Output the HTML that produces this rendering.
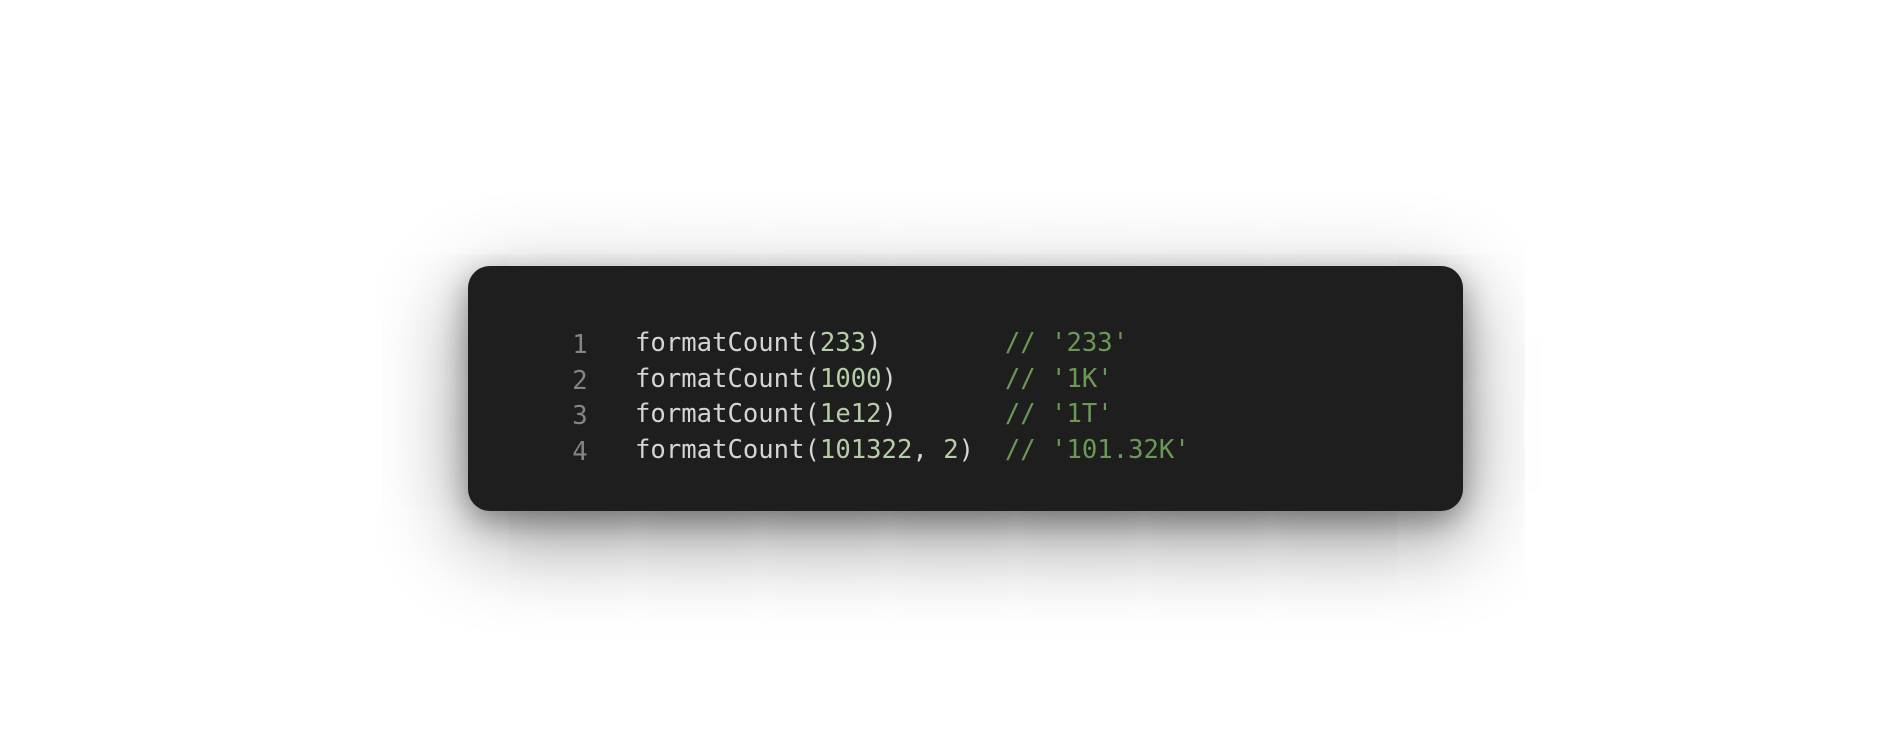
<!DOCTYPE html>
<html><head><meta charset="utf-8"><style>
html,body{margin:0;padding:0;background:#fff;width:1890px;height:747px;overflow:hidden}
.card{position:absolute;left:468px;top:266px;width:995px;height:245px;background:#1e1e1e;border-radius:22px;
box-shadow:0 25px 90px rgba(0,0,0,.45),0 10px 30px rgba(0,0,0,.35)}
.code{position:absolute;left:0;top:60px;font-family:"DejaVu Sans Mono","Liberation Mono",monospace;font-size:25.6px;line-height:35.5px;color:#d4d4d4;white-space:pre}
.ln{display:inline-block;width:167px;text-align:left;color:#858585}
.ln span{display:inline-block;width:30px;margin-left:97px;text-align:center;position:relative;top:2px}
.n{color:#b5cea8}.c{color:#6a9955}
</style></head><body>
<div class="card"><div class="code"><div><span class="ln"><span>1</span></span>formatCount(<span class="n">233</span>)        <span class="c">// '233'</span></div><div><span class="ln"><span>2</span></span>formatCount(<span class="n">1000</span>)       <span class="c">// '1K'</span></div><div><span class="ln"><span>3</span></span>formatCount(<span class="n">1e12</span>)       <span class="c">// '1T'</span></div><div><span class="ln"><span>4</span></span>formatCount(<span class="n">101322</span>, <span class="n">2</span>)  <span class="c">// '101.32K'</span></div></div></div>
</body></html>
